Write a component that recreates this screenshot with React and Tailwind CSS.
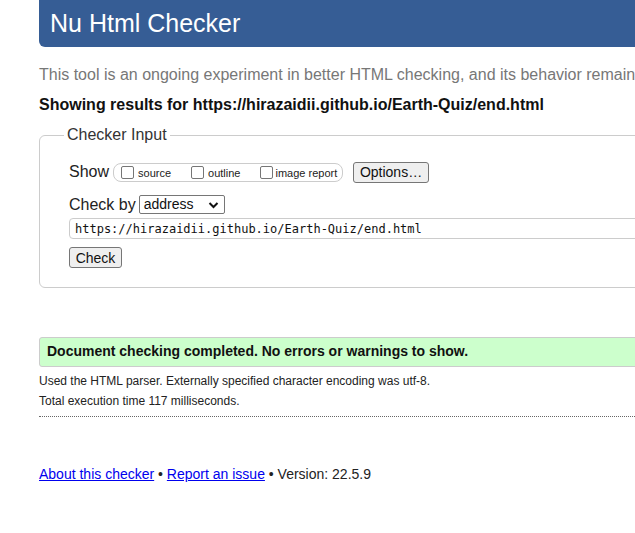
export default function App() {
  return (
    <div className="w-[635px] h-[533px] overflow-hidden bg-white font-['Liberation_Sans',Arial,sans-serif] text-[#222]">
      <div className="w-[900px] ml-[39px]">
        {/* header bar */}
        <div className="h-[47px] bg-[#365d95] rounded-bl-md pl-[11px] flex items-center">
          <h1 className="text-[25px] leading-none text-white pb-[1px]">Nu Html Checker</h1>
        </div>

        <p className="mt-[19px] text-[16px] leading-[18px] text-[#777] whitespace-nowrap">
          This tool is an ongoing experiment in better HTML checking, and its behavior remains subject to change
        </p>
        <p className="mt-[12px] text-[16px] leading-[18px] font-bold text-[#111]">
          Showing results for https://hirazaidii.github.io/Earth-Quiz/end.html
        </p>

        {/* checker input */}
        <fieldset className="mt-[12px] border border-[#ccc] rounded-md pl-[29px] pb-[17px]">
          <legend className="ml-[-5px] px-[3px] text-[16px] leading-[18px] text-[#333]">Checker Input</legend>

          <div className="mt-[17px] flex items-center h-[22px]">
            <span className="text-[16px] text-[#222]">Show</span>
            <div className="ml-[4px] h-[19px] w-[230px] border border-[#ccc] rounded-lg flex items-center pl-[7px] text-[11px] text-[#222]">
              <label className="flex items-center">
                <span className="w-[13px] h-[13px] border border-[#767676] rounded-[2px] bg-white" />
                <span className="ml-[4px] mt-[2px]">source</span>
              </label>
              <label className="flex items-center ml-[20px]">
                <span className="w-[13px] h-[13px] border border-[#767676] rounded-[2px] bg-white" />
                <span className="ml-[4px] mt-[2px]">outline</span>
              </label>
              <label className="flex items-center ml-[20px]">
                <span className="w-[13px] h-[13px] border border-[#767676] rounded-[2px] bg-white" />
                <span className="ml-[2px] mt-[2px]">image report</span>
              </label>
            </div>
            <button className="ml-[10px] h-[21px] w-[76px] bg-[#efefef] border border-[#767676] rounded-[3px] text-[14px] leading-none text-[#111]">
              Options…
            </button>
          </div>

          <div className="mt-[12px] flex items-center h-[19px]">
            <span className="text-[16px] text-[#222]">Check by</span>
            <div className="ml-[3px] h-[19px] w-[86px] border border-[#767676] rounded-[2px] flex items-center justify-between pl-[4px] pr-[5px] text-[14px] text-[#111]">
              <span>address</span>
              <svg width="11" height="8" viewBox="0 0 11 8" fill="none">
                <path d="M1.5 2 L5.5 6 L9.5 2" stroke="#111" strokeWidth="2" />
              </svg>
            </div>
          </div>

          <div className="mt-[4px] h-[21px] w-[820px] border border-[#ccc] rounded-[4px] flex items-center pl-[5px] text-[12px] font-['DejaVu_Sans_Mono',monospace] text-[#111]">
            https://hirazaidii.github.io/Earth-Quiz/end.html
          </div>

          <button className="mt-[8px] h-[21px] w-[53px] bg-[#efefef] border border-[#767676] rounded-[3px] text-[14px] leading-none text-[#111]">
            Check
          </button>
        </fieldset>

        {/* result */}
        <div className="mt-[49px] h-[30px] bg-[#ccffcc] border border-[#ccc] rounded-l-[3px] flex items-center pl-[7px] text-[14px] font-bold text-[#111]">
          Document checking completed. No errors or warnings to show.
        </div>
        <p className="mt-[7px] text-[12px] leading-[14px] text-[#222]">
          Used the HTML parser. Externally specified character encoding was utf-8.
        </p>
        <p className="mt-[6px] text-[12px] leading-[14px] text-[#222]">Total execution time 117 milliseconds.</p>
        <div className="mt-[8px] border-t border-dotted border-[#666]" />

        {/* footer */}
        <p className="mt-[49px] text-[14px] leading-[16px] text-[#222]">
          <a href="#" className="text-[#0000ee] underline">About this checker</a>
          {' • '}
          <a href="#" className="text-[#0000ee] underline">Report an issue</a>
          {' • Version: 22.5.9'}
        </p>
      </div>
    </div>
  );
}
